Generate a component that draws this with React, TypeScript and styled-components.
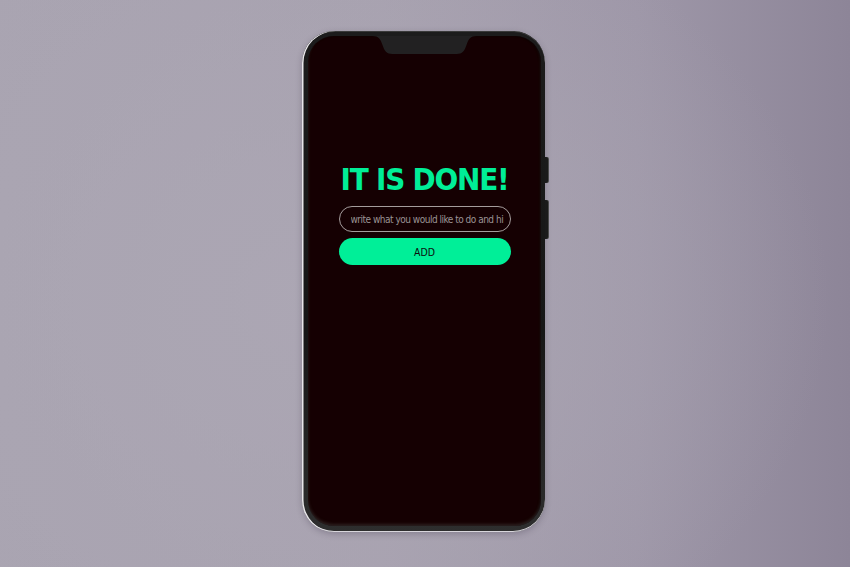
import React from "react";
import styled, { createGlobalStyle } from "styled-components";

const Global = createGlobalStyle`
  html, body { margin: 0; padding: 0; }
  body {
    width: 850px;
    height: 567px;
    overflow: hidden;
    font-family: "DejaVu Sans", Verdana, sans-serif;
  }
`;

const Stage = styled.div`
  width: 850px;
  height: 567px;
  display: flex;
  align-items: flex-start;
  justify-content: center;
  padding-top: 31px;
  box-sizing: border-box;
  padding-right: 3px;
  background:
    radial-gradient(ellipse 520px 420px at 310px 300px, rgba(172,167,180,0.9) 0%, rgba(172,167,180,0) 100%),
    linear-gradient(90deg, #a9a4b1 0%, #a7a1af 45%, #9e97a8 75%, #8d8598 100%);
`;

const Phone = styled.div`
  position: relative;
  width: 243px;
  height: 501px;
  box-sizing: border-box;
  border-radius: 32px;
  padding: 5px 4px 6px 6px;
  background: linear-gradient(180deg, #1c1c1c 0%, #161616 60%, #2e2e2e 100%);
  box-shadow:
    inset 1.5px 0 0 #e8e6ea,
    inset 0 -1px 0 #d8d6dc,
    inset 0 1px 0 #3a3a3a,
    0 2px 6px rgba(40, 30, 50, 0.25);
`;

const SideButton = styled.div<{ $top: number; $h: number }>`
  position: absolute;
  right: -3px;
  top: ${(p) => p.$top}px;
  width: 3px;
  height: ${(p) => p.$h}px;
  background: #1a1a1a;
  border-radius: 0 2px 2px 0;
  box-shadow: 1px 0 0 #4a4a4a;
`;

const Screen = styled.div`
  position: relative;
  height: 100%;
  border-radius: 26px;
  background: #150002;
  box-shadow: inset 0 -2px 3px rgba(90, 90, 90, 0.35), inset -1px 0 2px rgba(0,0,0,0.6);
  display: flex;
  flex-direction: column;
  align-items: center;
  padding-top: 124px;
  box-sizing: border-box;
`;

const Notch = styled.div`
  position: absolute;
  top: 0;
  left: 50%;
  transform: translateX(-50%);
  width: 104px;
  height: 18px;
  background: #222122;
  clip-path: path("M0 0 L104 0 C98 0 96 3 94 9 C92 15 90 18 84 18 L20 18 C14 18 12 15 10 9 C8 3 6 0 0 0 Z");
`;

const Title = styled.h1`
  margin: 0 0 8px 0;
  font-family: "DejaVu Sans", Verdana, sans-serif;
  font-stretch: condensed;
  font-weight: bold;
  font-size: 31px;
  line-height: 38px;
  color: #00ee97;
  letter-spacing: -1.2px;
  white-space: nowrap;
`;

const Form = styled.div`
  width: 172px;
  display: flex;
  flex-direction: column;
  gap: 6px;
`;

const Input = styled.input`
  box-sizing: border-box;
  width: 100%;
  height: 26px;
  border-radius: 13px;
  border: 1.5px solid #a49c9c;
  background: transparent;
  padding: 0 6px 0 11px;
  font-family: "DejaVu Sans", sans-serif;
  font-stretch: condensed;
  font-size: 10px;
  letter-spacing: -0.5px;
  color: #ccc;
  outline: none;
  &::placeholder {
    color: #9a9394;
  }
`;

const AddButton = styled.button`
  box-sizing: border-box;
  width: 100%;
  height: 27px;
  border-radius: 14px;
  border: none;
  background: #00ef98;
  color: #0d0d0d;
  font-family: "DejaVu Sans", sans-serif;
  font-stretch: condensed;
  font-size: 10.5px;
  cursor: pointer;
`;

export default function App() {
  return (
    <>
      <Global />
      <Stage>
        <Phone>
          <SideButton $top={126} $h={26} />
          <SideButton $top={169} $h={39} />
          <Screen>
            <Notch />
            <Title>IT IS DONE!</Title>
            <Form>
              <Input placeholder="write what you would like to do and hi" />
              <AddButton>ADD</AddButton>
            </Form>
          </Screen>
        </Phone>
      </Stage>
    </>
  );
}
